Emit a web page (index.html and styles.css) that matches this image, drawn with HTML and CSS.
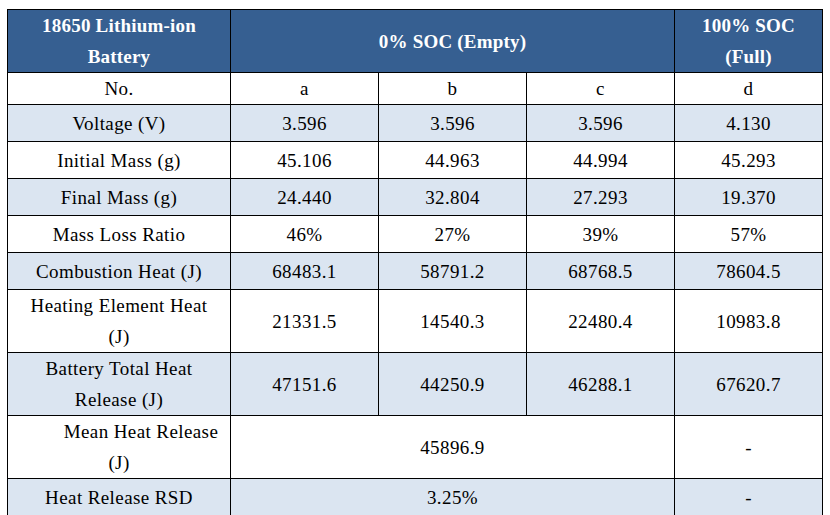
FILE: index.html
```html
<!DOCTYPE html>
<html>
<head>
<meta charset="utf-8">
<link rel="stylesheet" href="styles.css">
</head>
<body>
<table class="data">
  <colgroup>
    <col class="c-label">
    <col class="c-val">
    <col class="c-val">
    <col class="c-val">
    <col class="c-val">
  </colgroup>
  <tr class="head">
    <th>18650 Lithium-ion<br>Battery</th>
    <th colspan="3">0% SOC (Empty)</th>
    <th>100% SOC<br>(Full)</th>
  </tr>
  <tr class="r-sm">
    <td>No.</td><td>a</td><td>b</td><td>c</td><td>d</td>
  </tr>
  <tr class="r-md alt">
    <td>Voltage (V)</td><td>3.596</td><td>3.596</td><td>3.596</td><td>4.130</td>
  </tr>
  <tr class="r-md">
    <td>Initial Mass (g)</td><td>45.106</td><td>44.963</td><td>44.994</td><td>45.293</td>
  </tr>
  <tr class="r-md alt">
    <td>Final Mass (g)</td><td>24.440</td><td>32.804</td><td>27.293</td><td>19.370</td>
  </tr>
  <tr class="r-md">
    <td>Mass Loss Ratio</td><td>46%</td><td>27%</td><td>39%</td><td>57%</td>
  </tr>
  <tr class="r-md alt">
    <td>Combustion Heat (J)</td><td>68483.1</td><td>58791.2</td><td>68768.5</td><td>78604.5</td>
  </tr>
  <tr class="r-lg">
    <td>Heating Element Heat<br>(J)</td><td>21331.5</td><td>14540.3</td><td>22480.4</td><td>10983.8</td>
  </tr>
  <tr class="r-lg alt">
    <td>Battery Total Heat<br>Release (J)</td><td>47151.6</td><td>44250.9</td><td>46288.1</td><td>67620.7</td>
  </tr>
  <tr class="r-lg">
    <td><span class="indent">Mean Heat Release</span><br>(J)</td><td colspan="3">45896.9</td><td>-</td>
  </tr>
  <tr class="r-md alt">
    <td>Heat Release RSD</td><td colspan="3">3.25%</td><td>-</td>
  </tr>
</table>
</body>
</html>
```

FILE: styles.css
```css
html, body {
  margin: 0;
  padding: 0;
  background: #ffffff;
}

body {
  padding: 9px 0 0 7px;
  font-family: "Liberation Serif", "Times New Roman", serif;
  font-size: 19px;
  color: #000000;
}

.data {
  border-collapse: collapse;
  table-layout: fixed;
  width: 815px;
}

.c-label { width: 223px; }
.c-val { width: 148px; }

.data th,
.data td {
  border: 1px solid #000000;
  padding: 0;
  text-align: center;
  vertical-align: middle;
  line-height: 31px;
}

.data td {
  letter-spacing: 0.4px;
}

.data th {
  letter-spacing: 0.2px;
}

.head th {
  background: #365f91;
  color: #ffffff;
  font-weight: bold;
  height: 62px;
}

.r-sm td { height: 31px; }
.r-md td { height: 36px; }
.r-lg td { height: 62px; }

.alt td { background: #dbe5f1; }

.indent {
  padding-left: 44px;
}
```
